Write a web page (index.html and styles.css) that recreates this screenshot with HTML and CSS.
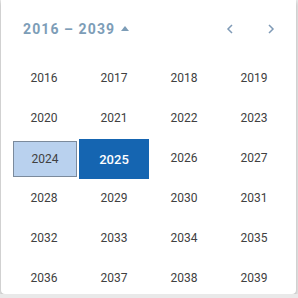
FILE: index.html
```html
<!DOCTYPE html>
<html lang="en">

<head>
    <meta charset="UTF-8">
    <meta name="viewport" content="width=device-width, initial-scale=1.0">
    <title>Year Picker</title>
    <link rel="stylesheet" href="styles.css">
</head>

<body>
    <div class="picker">
        <div class="picker-header">
            <button class="range-toggle">
                <span class="range-label">2016 – 2039</span>
                <span class="caret"></span>
            </button>
            <div class="nav">
                <button class="nav-btn" aria-label="Previous">
                    <svg width="8" height="10" viewBox="0 0 8 10"><path d="M6 1 L2 5 L6 9" fill="none" stroke="currentColor" stroke-width="1.5"/></svg>
                </button>
                <button class="nav-btn" aria-label="Next">
                    <svg width="8" height="10" viewBox="0 0 8 10"><path d="M2 1 L6 5 L2 9" fill="none" stroke="currentColor" stroke-width="1.5"/></svg>
                </button>
            </div>
        </div>
        <div class="year-grid">
            <div class="year">2016</div>
            <div class="year">2017</div>
            <div class="year">2018</div>
            <div class="year">2019</div>
            <div class="year">2020</div>
            <div class="year">2021</div>
            <div class="year">2022</div>
            <div class="year">2023</div>
            <div class="year focused"><span>2024</span></div>
            <div class="year selected">2025</div>
            <div class="year">2026</div>
            <div class="year">2027</div>
            <div class="year">2028</div>
            <div class="year">2029</div>
            <div class="year">2030</div>
            <div class="year">2031</div>
            <div class="year">2032</div>
            <div class="year">2033</div>
            <div class="year">2034</div>
            <div class="year">2035</div>
            <div class="year">2036</div>
            <div class="year">2037</div>
            <div class="year">2038</div>
            <div class="year">2039</div>
        </div>
    </div>
</body>

</html>
```

FILE: styles.css
```css
body {
    margin: 0;
    background: #e9e9e9;
    font-family: Roboto, "Liberation Sans", sans-serif;
}

.picker {
    margin-left: 1px;
    width: 295px;
    height: 294px;
    background: #fff;
    border-radius: 0 0 4px 4px;
    box-shadow: 0 2px 4px rgba(0, 0, 0, 0.25);
    overflow: hidden;
}

.picker-header {
    height: 58px;
    display: flex;
    align-items: center;
    justify-content: space-between;
    padding: 0 13px 0 22px;
}

button {
    background: none;
    border: 0;
    padding: 0;
    font: inherit;
    cursor: pointer;
}

.range-toggle {
    display: flex;
    align-items: center;
    gap: 6px;
    color: #7d9db7;
}

.range-label {
    font-size: 14px;
    font-weight: 700;
    letter-spacing: 1.1px;
}

.caret {
    width: 0;
    height: 0;
    border-left: 4px solid transparent;
    border-right: 4px solid transparent;
    border-bottom: 5px solid #7d9db7;
    margin-top: -1px;
}

.nav {
    display: flex;
    gap: 17px;
}

.nav-btn {
    width: 24px;
    height: 24px;
    display: flex;
    align-items: center;
    justify-content: center;
    color: #7f9ab6;
}

.year-grid {
    display: grid;
    grid-template-columns: repeat(4, 70px);
    grid-auto-rows: 40px;
    padding-left: 8px;
}

.year {
    display: flex;
    align-items: center;
    justify-content: center;
    font-size: 12px;
    color: #404040;
}

.year.focused span {
    width: 62px;
    height: 34px;
    display: flex;
    align-items: center;
    justify-content: center;
    background: #b9d1ee;
    border: 1px solid #7b8a9c;
    margin-left: 2px;
    margin-top: 2px;
}

.year.selected {
    background: #1565b1;
    color: #fff;
    font-weight: 500;
    font-size: 13px;
    margin-top: 1px;
    margin-bottom: -1px;
}
```
